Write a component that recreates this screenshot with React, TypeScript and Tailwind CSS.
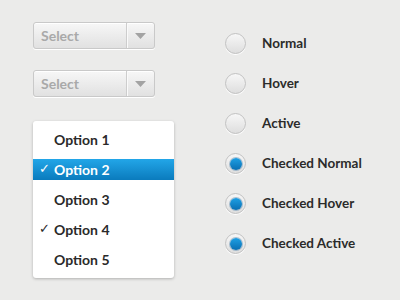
import React from "react";

const font = { fontFamily: "Lato, 'Open Sans', sans-serif" };

function SelectBox() {
  return (
    <div className="flex h-[27px] w-[122px] rounded-[3px] border border-[#c9c9c9] bg-gradient-to-b from-[#f7f7f7] to-[#e1e1e1] shadow-[inset_0_1px_0_#ffffff,0_1px_0_#ffffff]">
      <div className="flex flex-1 items-center pl-[7px] text-[14px] font-bold text-[#a9a9a9]">Select</div>
      <div className="flex w-[28px] items-center justify-center border-l border-[#cdcdcd] shadow-[inset_1px_0_0_#fafafa]">
        <svg width="11" height="6" viewBox="0 0 11 6">
          <path d="M0 0 L11 0 L5.5 6 Z" fill="#a3a3a3" />
        </svg>
      </div>
    </div>
  );
}

const options = [
  { label: "Option 1", checked: false, active: false },
  { label: "Option 2", checked: true, active: true },
  { label: "Option 3", checked: false, active: false },
  { label: "Option 4", checked: true, active: false },
  { label: "Option 5", checked: false, active: false },
];

function Dropdown() {
  return (
    <div className="w-[141px] rounded-[3px] bg-white pt-[3px] pb-[4px] shadow-[0_1px_3px_rgba(0,0,0,0.25)]">
      {options.map((o) => (
        <div key={o.label} className="flex h-[30px] items-center">
          <div
            className={
              o.active
                ? "flex h-[21px] w-full items-center bg-gradient-to-b from-[#22a6e8] to-[#0a7bbd] text-white"
                : "flex h-[21px] w-full items-center text-[#2a2a2a]"
            }
          >
            <span className="w-[21px] pl-[6px] text-[13px]">{o.checked ? "✓" : ""}</span>
            <span className="text-[14px] font-bold">{o.label}</span>
          </div>
        </div>
      ))}
    </div>
  );
}

function Radio({ checked }: { checked: boolean }) {
  return (
    <div className="flex h-[21px] w-[21px] items-center justify-center rounded-full border border-[#c2c2c2] bg-gradient-to-b from-[#f7f7f7] to-[#dedede] shadow-[0_1px_0_#ffffff]">
      {checked && (
        <div className="h-[12px] w-[12px] rounded-full bg-gradient-to-b from-[#1ea0e4] to-[#0a6fb3] shadow-[0_0_0_1px_rgba(0,80,140,0.3)]" />
      )}
    </div>
  );
}

const radios = [
  { label: "Normal", checked: false },
  { label: "Hover", checked: false },
  { label: "Active", checked: false },
  { label: "Checked Normal", checked: true },
  { label: "Checked Hover", checked: true },
  { label: "Checked Active", checked: true },
];

export default function App() {
  return (
    <div className="flex h-[300px] w-[400px] bg-[#ebebea]" style={font}>
      <div className="flex flex-col pl-[33px] pt-[22px]">
        <SelectBox />
        <div className="mt-[21px]">
          <SelectBox />
        </div>
        <div className="mt-[24px]">
          <Dropdown />
        </div>
      </div>
      <div className="flex flex-col gap-[19px] pl-[51px] pt-[33px]">
        {radios.map((r) => (
          <div key={r.label} className="flex items-center gap-[16px]">
            <Radio checked={r.checked} />
            <span className="text-[13.5px] font-bold text-[#2b2b2b]">{r.label}</span>
          </div>
        ))}
      </div>
    </div>
  );
}
